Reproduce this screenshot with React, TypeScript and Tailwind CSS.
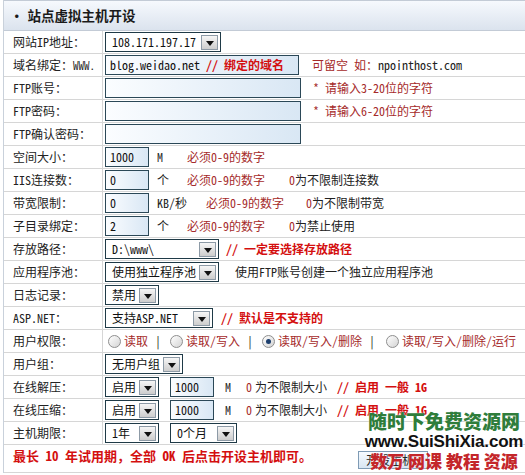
import React from "react";

const F = "font-['Noto_Sans_Mono_CJK_SC','Noto_Sans_CJK_SC',sans-serif]";

function Arrow() {
  return (
    <span className="flex h-[15px] w-[17px] shrink-0 items-center justify-center border border-[#8d9aa6] bg-gradient-to-b from-[#f6f6f6] to-[#cdcdcd]">
      <svg width="8" height="5" viewBox="0 0 8 5" className="mt-[3px]">
        <path d="M0 0 L8 0 L4 5 Z" fill="#111" />
      </svg>
    </span>
  );
}

function Sel({ cls, children }: { cls: string; children: React.ReactNode }) {
  return (
    <div className={`flex h-[20px] shrink-0 items-center justify-between border border-[#1f3a47] bg-white pl-[6px] pr-[2px] ${cls}`}>
      <span className="whitespace-nowrap text-[#111]">{children}</span>
      <Arrow />
    </div>
  );
}

function Inp({ cls, children }: { cls: string; children?: React.ReactNode }) {
  return (
    <div className={`flex h-[20px] shrink-0 items-center border border-[#2b4857] bg-gradient-to-r from-[#fbfdff] to-[#d9e7f4] pl-[4px] ${cls}`}>
      <span className="whitespace-nowrap text-[#111]">{children}</span>
    </div>
  );
}

function Row({ label, children }: { label: React.ReactNode; children?: React.ReactNode }) {
  return (
    <div className="flex h-[23px] border-b border-[#d6d6d6]">
      <div className="flex w-[99px] shrink-0 items-center border-r border-[#d6d6d6] pl-[9px] whitespace-nowrap text-[#222]">
        {label}
      </div>
      <div className="flex flex-1 items-center pl-[2px] whitespace-nowrap">{children}</div>
    </div>
  );
}

function Radio({ checked }: { checked?: boolean }) {
  return (
    <span className="flex h-[13px] w-[13px] shrink-0 items-center justify-center rounded-full border border-[#8e8e8e] bg-gradient-to-br from-[#ffffff] to-[#d4d4d4]">
      {checked && <span className="h-[5px] w-[5px] rounded-full bg-[#1d3f6e]" />}
    </span>
  );
}

const red = "text-[#a52a2a]";
const bred = "font-bold text-[#d40f0f]";

export default function App() {
  return (
    <div className={`relative h-[475px] w-[525px] overflow-hidden bg-white text-[12px] ${F}`}>
      <div className="ml-[3px] border-l border-[#c9d1db]">
        <div className="flex h-[31px] items-center border-b border-t border-[#c3cbd6] bg-gradient-to-b from-[#f6f9fd] to-[#dbe3ee] pl-[6px] text-[13.5px] font-bold text-[#1a1a1a]">
          <span className="mr-[4px]">·</span>站点虚拟主机开设
        </div>

        <Row label="网站IP地址：">
          <Sel cls="w-[116px]">108.171.197.17</Sel>
        </Row>
        <Row label={<span>域名绑定：<span className="text-[11px]">WWW.</span></span>}>
          <Inp cls="w-[194px]">
            blog.weidao.net <span className={bred}>// 绑定的域名</span>
          </Inp>
          <span className={`ml-[13px] ${red}`}>可留空 如：</span>
          <span className="text-[#222]">npointhost.com</span>
        </Row>
        <Row label="FTP账号：">
          <Inp cls="w-[196px]" />
          <span className={`ml-[12px] ${red}`}>* 请输入3-20位的字符</span>
        </Row>
        <Row label="FTP密码：">
          <Inp cls="w-[196px]" />
          <span className={`ml-[12px] ${red}`}>* 请输入6-20位的字符</span>
        </Row>
        <Row label="FTP确认密码：">
          <Inp cls="w-[196px]" />
        </Row>
        <Row label="空间大小：">
          <Inp cls="w-[44px]">1000</Inp>
          <span className="ml-[8px] w-[30px] text-[#222]">M</span>
          <span className={red}>必须0-9的数字</span>
        </Row>
        <Row label="IIS连接数：">
          <Inp cls="w-[44px]">0</Inp>
          <span className="ml-[8px] w-[30px] text-[#222]">个</span>
          <span className={red}>必须0-9的数字</span>
          <span className="ml-[24px] text-[#a52a2a]">0</span>
          <span className="text-[#222]">为不限制连接数</span>
        </Row>
        <Row label="带宽限制：">
          <Inp cls="w-[44px]">0</Inp>
          <span className="ml-[8px] w-[49px] text-[#222]">KB/秒</span>
          <span className={red}>必须0-9的数字</span>
          <span className="ml-[22px] text-[#a52a2a]">0</span>
          <span className="text-[#222]">为不限制带宽</span>
        </Row>
        <Row label="子目录绑定：">
          <Inp cls="w-[44px]">2</Inp>
          <span className="ml-[8px] w-[30px] text-[#222]">个</span>
          <span className={red}>必须0-9的数字</span>
          <span className="ml-[24px] text-[#a52a2a]">0</span>
          <span className="text-[#222]">为禁止使用</span>
        </Row>
        <Row label="存放路径：">
          <Sel cls="w-[114px]">D:\www\</Sel>
          <span className={`ml-[7px] ${bred}`}>// 一定要选择存放路径</span>
        </Row>
        <Row label="应用程序池：">
          <Sel cls="w-[114px]">使用独立程序池</Sel>
          <span className="ml-[16px] text-[#222]">使用FTP账号创建一个独立应用程序池</span>
        </Row>
        <Row label="日志记录：">
          <Sel cls="w-[54px]">禁用</Sel>
        </Row>
        <Row label="ASP.NET：">
          <Sel cls="w-[108px]">支持ASP.NET</Sel>
          <span className={`ml-[8px] ${bred}`}>// 默认是不支持的</span>
        </Row>
        <Row label="用户权限：">
          <span className="ml-[3px]" />
          <Radio />
          <span className={`ml-[3px] ${red}`}>读取</span>
          <span className="ml-[7px] text-[#222]">|</span>
          <span className="ml-[9px]" />
          <Radio />
          <span className={`ml-[3px] ${red}`}>读取/写入</span>
          <span className="ml-[7px] text-[#222]">|</span>
          <span className="ml-[9px]" />
          <Radio checked />
          <span className={`ml-[3px] ${red}`}>读取/写入/删除</span>
          <span className="ml-[7px] text-[#222]">|</span>
          <span className="ml-[11px]" />
          <Radio />
          <span className={`ml-[3px] ${red}`}>读取/写入/删除/运行</span>
        </Row>
        <Row label="用户组：">
          <Sel cls="w-[78px]">无用户组</Sel>
        </Row>
        <Row label="在线解压：">
          <Sel cls="w-[54px]">启用</Sel>
          <Inp cls="ml-[11px] w-[44px]">1000</Inp>
          <span className="ml-[11px] text-[#222]">M</span>
          <span className="ml-[15px] text-[#a52a2a]">0</span>
          <span className="ml-[3px] text-[#222]">为不限制大小</span>
          <span className={`ml-[10px] ${bred}`}>// 启用 一般 1G</span>
        </Row>
        <Row label="在线压缩：">
          <Sel cls="w-[54px]">启用</Sel>
          <Inp cls="ml-[11px] w-[44px]">1000</Inp>
          <span className="ml-[11px] text-[#222]">M</span>
          <span className="ml-[15px] text-[#a52a2a]">0</span>
          <span className="ml-[3px] text-[#222]">为不限制大小</span>
          <span className={`ml-[10px] ${bred}`}>// 启用 一般 1G</span>
        </Row>
        <Row label="主机期限：">
          <Sel cls="w-[54px]">1年</Sel>
          <Sel cls="ml-[11px] w-[67px]">0个月</Sel>
        </Row>
        <div className="flex h-[28px] items-start border-b border-[#d6d6d6] pl-[9px]">
          <span className="mt-[1px] text-[13px] font-bold text-[#d40f0f]">
            最长 10 年试用期，全部 OK 后点击开设主机即可。
          </span>
          <div className="ml-[46px] mt-[6px] flex h-[18px] w-[70px] items-center border border-[#7f9bb5] bg-gradient-to-b from-[#f7fbff] to-[#d8e6f3] pl-[7px] text-[#222]">
            开设主机
          </div>
        </div>
      </div>

      <div className="absolute left-[366px] top-[411px] flex w-[156px] flex-col items-center leading-none">
        <span className="font-['Noto_Sans_CJK_SC',sans-serif] text-[19px] font-black text-[#2f7d3b] [text-shadow:0_0_2px_#fff]">
          随时下免费资源网
        </span>
        <span className="mt-[3px] font-['Liberation_Sans',sans-serif] text-[17px] font-bold tracking-[-0.2px] text-[#111] [text-shadow:0_0_2px_#fff]">
          www.SuiShiXia.com
        </span>
        <span className="mt-[2px] whitespace-nowrap font-['Noto_Sans_CJK_SC',sans-serif] text-[17px] font-black text-[#c4262a] [text-shadow:0_0_2px_#fff]">
          数万 网课 教程 资源
        </span>
      </div>
    </div>
  );
}
